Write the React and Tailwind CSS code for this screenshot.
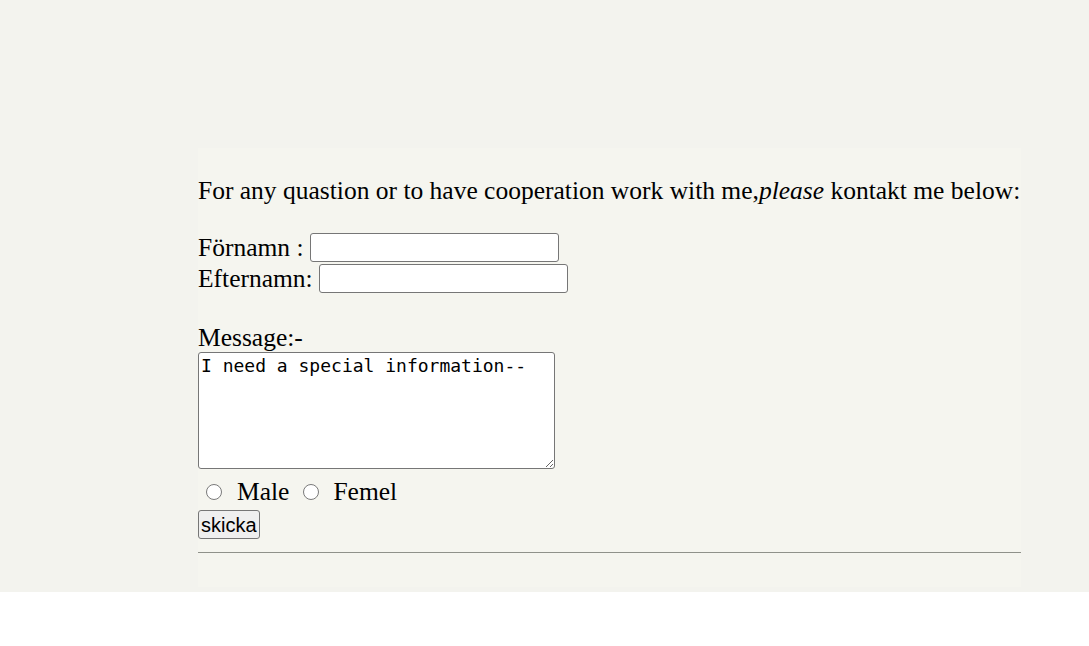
import React from "react";

function Radio() {
  return (
    <span
      role="radio"
      aria-checked="false"
      className="block w-[16px] h-[16px] rounded-full border border-[#7a7a7a] bg-white shrink-0"
    />
  );
}

export default function App() {
  return (
    <div className="w-full bg-[#f3f3ee]" style={{ fontFamily: '"Liberation Serif", "Times New Roman", serif' }}>
      <div className="h-[592px] pt-[148px] pl-[198px]">
        <div className="w-[823px] h-[439px] bg-[#f5f5ef] text-[25.5px] text-black box-border pt-[29px]">
          <p className="leading-[28px] whitespace-nowrap">
            For any quastion or to have cooperation work with me,<em>please</em> kontakt me below:
          </p>
          <div className="mt-[27px]">
            <div className="flex items-center h-[31px]">
              <span className="leading-[28px]">Förnamn :</span>
              <input type="text" className="ml-[6px] w-[249px] h-[29px] bg-white border border-[#767676] rounded-[3px]" />
            </div>
            <div className="flex items-center h-[31px]">
              <span className="leading-[28px]">Efternamn:</span>
              <input type="text" className="ml-[6px] w-[249px] h-[29px] bg-white border border-[#767676] rounded-[3px]" />
            </div>
          </div>
          <div className="mt-[30px] leading-[28px]">Message:-</div>
          <textarea
            className="block w-[357px] h-[117px] bg-white border border-[#767676] rounded-[3px] px-[2px] pt-[2px] pb-[1px] text-[18px] leading-[21px] text-black resize"
            style={{ fontFamily: '"DejaVu Sans Mono", "Liberation Mono", monospace' }}
            defaultValue="I need a special information--"
          />
          <div className="flex items-center h-[36px] mt-[5px]">
            <span className="ml-[8px] flex"><Radio /></span>
            <span className="ml-[15px] leading-[28px]">Male</span>
            <span className="ml-[14px] flex"><Radio /></span>
            <span className="ml-[14px] leading-[28px]">Femel</span>
          </div>
          <button
            className="block h-[29px] px-[2px] bg-[#efefef] border border-[#767676] rounded-[3px] text-[20px] leading-[22px] text-black"
            style={{ fontFamily: '"Liberation Sans", Arial, sans-serif' }}
          >
            skicka
          </button>
          <hr className="mt-[13px] border-0 border-t border-[#8f918a]" />
        </div>
      </div>
      <div className="h-[54px] bg-white" />
    </div>
  );
}
